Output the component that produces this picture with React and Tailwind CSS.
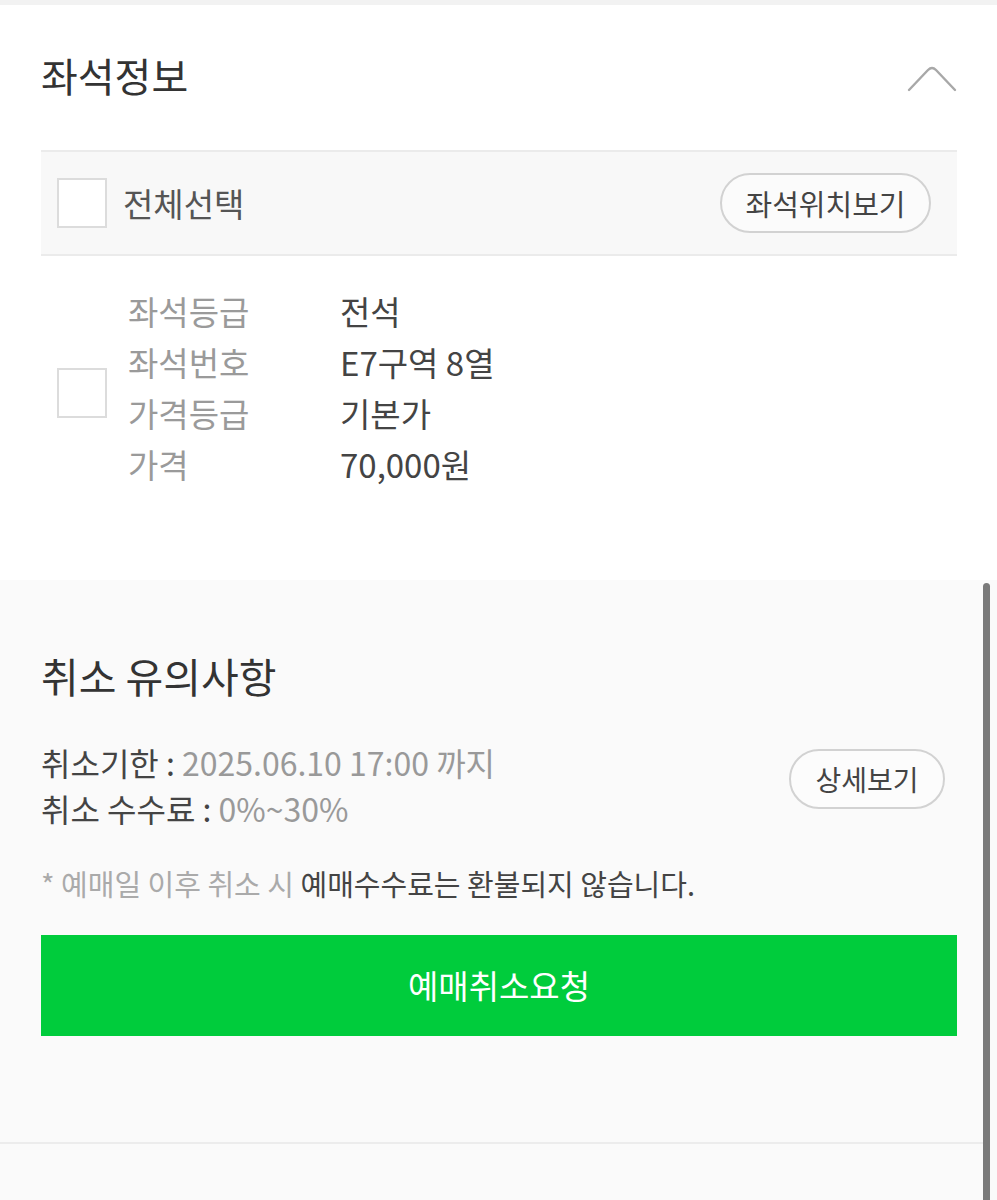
import React from 'react';

const seat = [
  { label: '좌석등급', value: '전석' },
  { label: '좌석번호', value: 'E7구역 8열' },
  { label: '가격등급', value: '기본가' },
  { label: '가격', value: '70,000원' },
];

const Checkbox = ({ className = '' }) => (
  <span className={`block w-[50px] h-[50px] shrink-0 border-2 border-[#dcdcdc] bg-white ${className}`} />
);

const PillButton = ({ children, className = '' }) => (
  <button
    className={`rounded-full border-2 border-[#d2d2d2] bg-white/40 text-[#444] leading-none ${className}`}
  >
    {children}
  </button>
);

const ChevronUp = () => (
  <svg width="52" height="30" viewBox="0 0 52 30" fill="none">
    <path
      d="M3 27 L22 7 Q26 3 30 7 L49 27"
      stroke="#a8a8a8"
      strokeWidth="2.4"
      strokeLinecap="round"
      strokeLinejoin="round"
    />
  </svg>
);

export default function App() {
  return (
    <div
      className="relative w-[997px] h-[1200px] overflow-hidden bg-[#fafafa] text-[#333]"
      style={{ fontFamily: '"Noto Sans CJK KR", "Noto Sans", sans-serif' }}
    >
      <div className="h-[5px] bg-[#f2f2f2]" />

      {/* seat info */}
      <section className="bg-white pl-[41px] pr-[40px] pb-[90px]">
        <div className="flex items-center justify-between h-[145px] pb-[5px]">
          <h2 className="text-[40px] leading-none text-[#333]">좌석정보</h2>
          <span className="mt-[6px] mr-[-1px]">
            <ChevronUp />
          </span>
        </div>

        <div className="flex items-center justify-between h-[106px] bg-[#f8f8f8] border-y-2 border-[#ebebeb] pl-[16px] pr-[26px]">
          <label className="flex items-center gap-[16px]">
            <Checkbox />
            <span className="text-[33px] leading-none text-[#555]">전체선택</span>
          </label>
          <PillButton className="w-[211px] h-[60px] text-[29px]">좌석위치보기</PillButton>
        </div>

        <div className="flex items-center pl-[16px] pt-[30px]">
          <Checkbox className="mt-[10px]" />
          <dl className="ml-[21px] grid grid-cols-[212px_1fr] text-[33px] leading-[51px]">
            {seat.map((row) => (
              <React.Fragment key={row.label}>
                <dt className="text-[#9a9a9a]">{row.label}</dt>
                <dd className="text-[#444]">{row.value}</dd>
              </React.Fragment>
            ))}
          </dl>
        </div>
      </section>

      {/* cancel notice */}
      <section className="pl-[41px] pr-[40px] pt-[75px]">
        <h2 className="text-[41px] leading-[40px] text-[#333]">취소 유의사항</h2>

        <div className="flex items-start justify-between mt-[44px]">
          <div className="text-[32px] leading-[46px]">
            <p>
              <span className="text-[#444]">취소기한 : </span>
              <span className="text-[#999]">2025.06.10 17:00 까지</span>
            </p>
            <p>
              <span className="text-[#444]">취소 수수료 : </span>
              <span className="text-[#999]">0%~30%</span>
            </p>
          </div>
          <PillButton className="w-[156px] h-[60px] mt-[10px] mr-[12px] text-[28px]">상세보기</PillButton>
        </div>

        <p className="mt-[37px] text-[29px] leading-[30px]">
          <span className="text-[#aaa]">* 예매일 이후 취소 시 </span>
          <span className="text-[#444]">예매수수료는 환불되지 않습니다.</span>
        </p>

        <button className="mt-[37px] w-full h-[101px] bg-[#00cc3c] text-white text-[33px]">
          예매취소요청
        </button>
      </section>

      <div className="mt-[106px] mr-[12px] border-t-2 border-[#ececec]" />

      {/* scroll thumb */}
      <div className="absolute right-[7px] top-[583px] bottom-0 w-[7px] rounded-t-full bg-[#7a7a7a]" />
    </div>
  );
}
